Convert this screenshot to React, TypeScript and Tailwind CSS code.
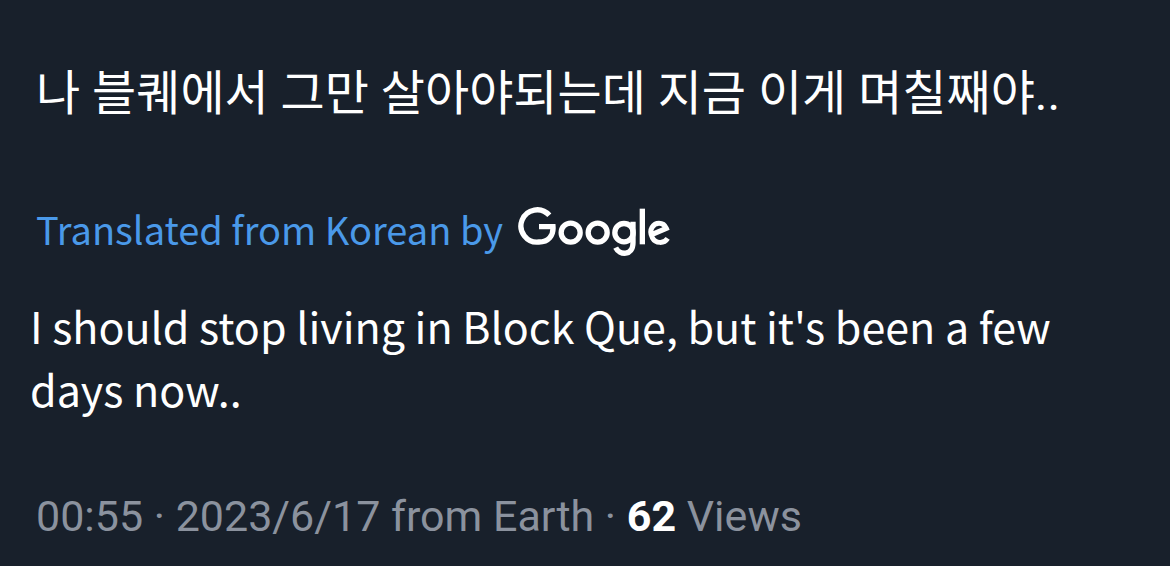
function GoogleLogo() {
  return (
    <svg
      role="img"
      aria-label="Google"
      viewBox="20 20 462 153"
      className="h-[51px] w-[154px] shrink-0"
      fill="none"
      stroke="currentColor"
      strokeWidth="16"
    >
      <path d="M114 48 A48.5 48.5 0 1 0 83 128 C111 128 127 109 125 82 H83" />
      <circle cx="178" cy="100" r="28.5" />
      <circle cx="259" cy="100" r="28.5" />
      <circle cx="338" cy="100" r="27.5" />
      <path d="M365 67 V130 C365 171 324 168 313 145" />
      <path d="M393 28 V135" />
      <path d="M469 117 C458 134 433 133 423 115 C410 90 427 72 443 72 C454 72 461 78 465 87 L421 106" strokeWidth="15" />
    </svg>
  );
}

export default function App() {
  return (
    <main className="min-h-screen bg-[#18202b] pt-[58px] pr-8 pb-4 font-['Noto_Sans_CJK_KR',sans-serif] text-white">
      <article>
        <p lang="ko" className="pl-9 font-['Roboto','Noto_Sans_CJK_KR',sans-serif] text-[48px] leading-[72px]">
          나 블퀘에서 그만 살아야되는데 지금 이게 며칠째야..
        </p>
        <div className="mt-[71px] flex items-end gap-[15px] pl-9">
          <a href="#translation" className="text-[38px] leading-[56px] text-[#4a99e9]">
            Translated from Korean by
          </a>
          <GoogleLogo />
        </div>
        <p className="mt-[37px] pl-[30px] text-[43px] leading-[63px]">
          I should stop living in Block Que, but it's been a few days now..
        </p>
        <p className="mt-[66px] pl-9 font-['Roboto',sans-serif] text-[43px] leading-[60px] text-[#8b929e]">
          <time dateTime="2023-06-17T00:55">00:55 · 2023/6/17</time> from Earth ·{" "}
          <b className="text-white">62</b> Views
        </p>
      </article>
    </main>
  );
}
